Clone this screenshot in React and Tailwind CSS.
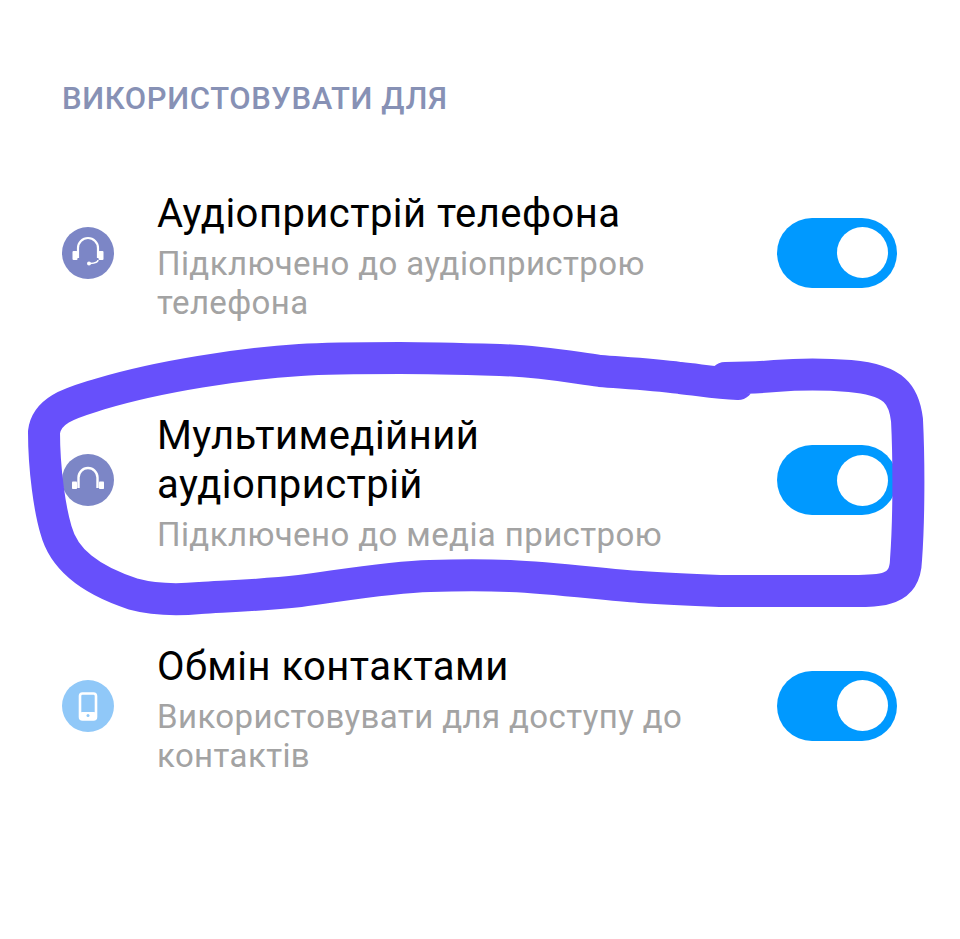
const font = { fontFamily: '"Roboto", "Noto Sans", sans-serif' };

function HeadsetIcon() {
  return (
    <svg viewBox="0 0 52 52" className="w-[52px] h-[52px]">
      <circle cx="26" cy="26" r="26" fill="#7c86c6" />
      <path d="M16 31V21a10 10 0 0 1 20 0v10" fill="none" stroke="#fff" strokeWidth="2.2" />
      <rect x="10.5" y="24" width="5" height="9" rx="1" fill="#fff" />
      <rect x="36.5" y="24" width="5" height="9" rx="1" fill="#fff" />
      <path d="M36 33q0 3-8 3.5" fill="none" stroke="#fff" strokeWidth="1.5" />
      <circle cx="27" cy="36.5" r="2" fill="#fff" />
    </svg>
  );
}

function HeadphonesIcon() {
  return (
    <svg viewBox="0 0 52 52" className="w-[52px] h-[52px]">
      <circle cx="26" cy="26" r="26" fill="#7c86c6" />
      <path d="M16.5 34V23.5a9.5 9.5 0 0 1 19 0V34" fill="none" stroke="#fff" strokeWidth="2.4" />
      <rect x="10" y="27.5" width="5" height="7.5" rx="0.8" fill="#fff" />
      <rect x="37" y="27.5" width="5" height="7.5" rx="0.8" fill="#fff" />
    </svg>
  );
}

function PhoneIcon() {
  return (
    <svg viewBox="0 0 52 52" className="w-[52px] h-[52px]">
      <circle cx="26" cy="26" r="26" fill="#90c8f8" />
      <rect x="18" y="13.5" width="16" height="26" rx="2.5" fill="none" stroke="#fff" strokeWidth="2.6" />
      <rect x="18" y="32" width="16" height="7.5" rx="2" fill="#fff" />
      <circle cx="26" cy="35.5" r="1.5" fill="#90c8f8" />
    </svg>
  );
}

function Toggle() {
  return (
    <div className="w-[120px] h-[70px] rounded-full bg-[#0099ff] flex items-center justify-end pr-[9px] shrink-0">
      <div className="w-[51px] h-[51px] rounded-full bg-white" />
    </div>
  );
}

function Row({ icon, title, sub, lift = "mb-[6px]" }) {
  return (
    <div className="flex items-center">
      <div className={`w-[52px] shrink-0 ${lift}`}>{icon}</div>
      <div className="ml-[43px] w-[560px]">
        <div className="text-[40px] leading-[49px] tracking-[0.45px] text-black">{title}</div>
        <div className="text-[33px] leading-[39px] tracking-[0.4px] text-[#a3a3a3] mt-[6px]">{sub}</div>
      </div>
      <div className={`ml-auto ${lift}`}><Toggle /></div>
    </div>
  );
}

export default function App() {
  return (
    <div className="relative w-[960px] h-[939px] bg-white overflow-hidden" style={font}>
      <div className="pl-[62px] pr-[63px] pt-[81px]">
        <div className="text-[31px] leading-[36px] tracking-[0.63px] font-medium text-[#8791b5]">ВИКОРИСТОВУВАТИ ДЛЯ</div>
        <div className="mt-[72px] flex flex-col gap-[88.5px]">
          <Row icon={<HeadsetIcon />} title="Аудіопристрій телефона" sub={<>Підключено до аудіопристрою<br />телефона</>} />
          <Row lift="mb-[4px]" icon={<HeadphonesIcon />} title={<>Мультимедійний<br />аудіопристрій</>} sub="Підключено до медіа пристрою" />
          <Row icon={<PhoneIcon />} title="Обмін контактами" sub={<>Використовувати для доступу до<br />контактів</>} />
        </div>
      </div>
      <svg className="absolute inset-0 pointer-events-none" width="960" height="939" viewBox="0 0 960 939" fill="none">
        <path
          d="M738 384C715 383 700 380 680 378C650 374 625 373 600 371C570 367 540 361 500 360C465 359 430 358 400 358C365 358 330 358 300 360C240 364 160 376 100 394C75 402 47 408 44 432C44 470 50 510 56 530C64 560 90 580 133 594C155 600 178 600 200 598C235 596 265 595 300 591C345 585 390 577 430 576C460 575 485 575 510 576C555 578 600 584 640 587C670 589 695 590 720 591C760 591 810 591 850 591C880 591 905 592 906 560C909 520 909 460 907 420C904 395 895 380 850 376C825 374 800 374 775 376C755 378 740 378 725 378"
          stroke="#6750fb"
          strokeWidth="32"
          strokeLinecap="round"
          strokeLinejoin="round"
        />
      </svg>
    </div>
  );
}
